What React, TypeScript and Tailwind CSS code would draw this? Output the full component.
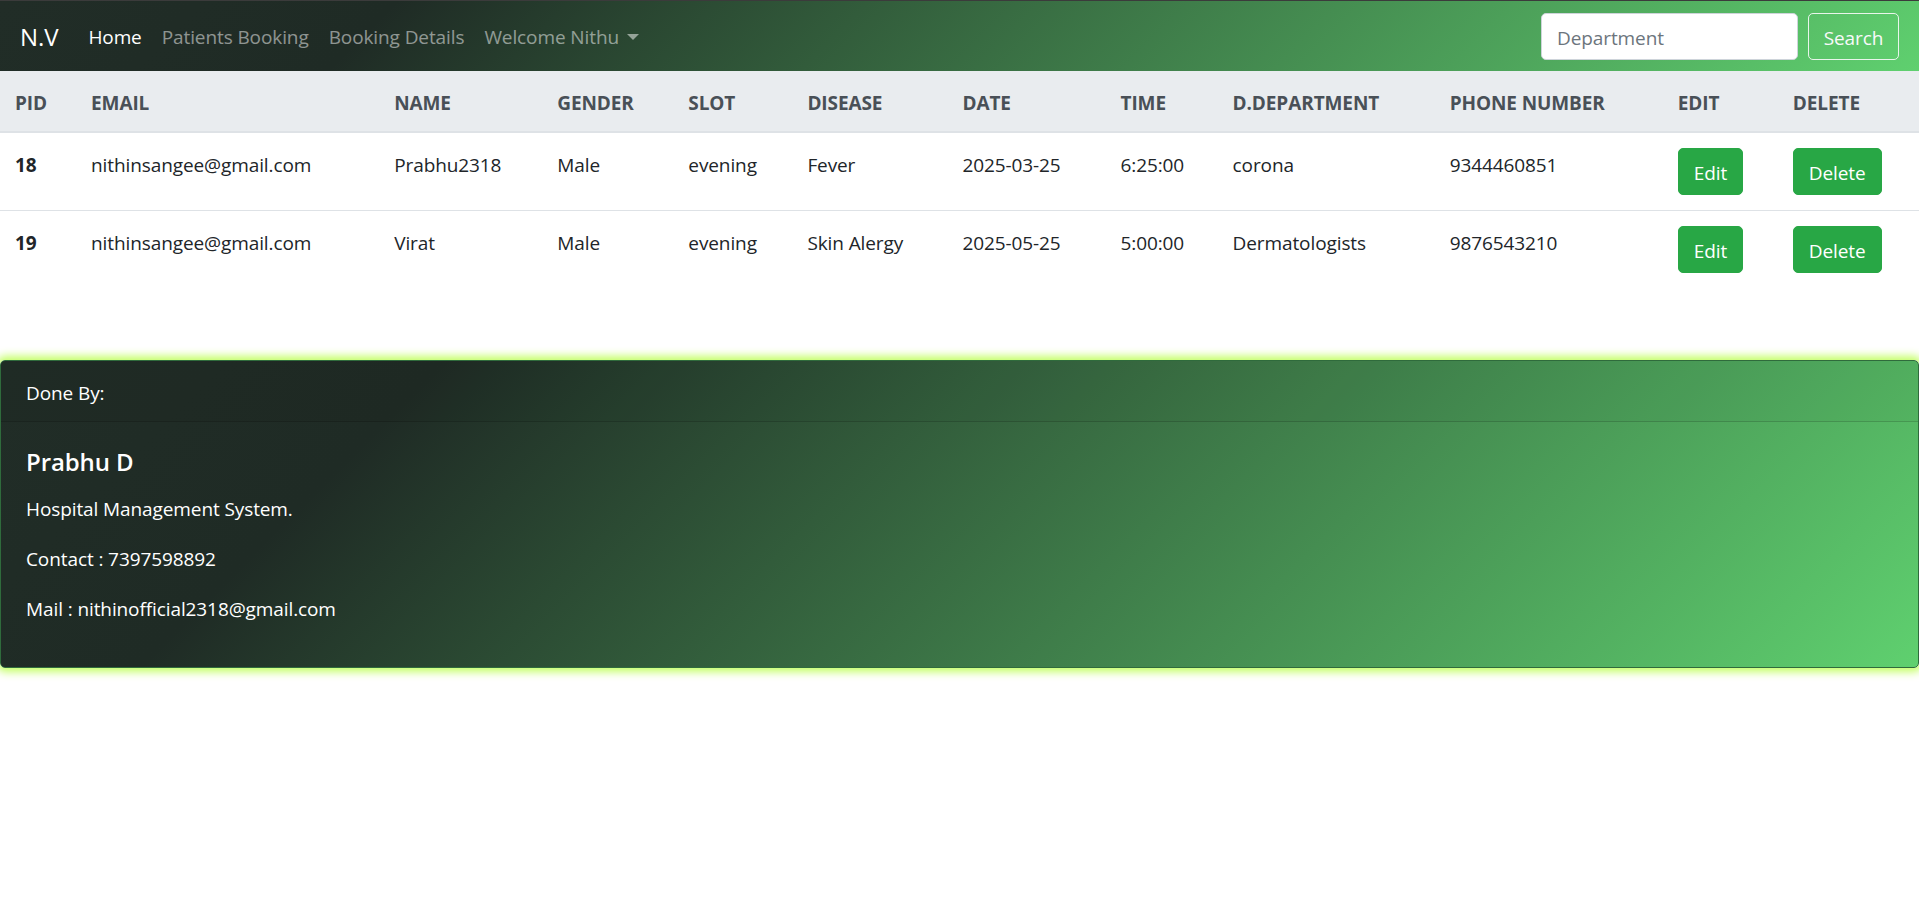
import React from "react";

const rows = [
  {
    pid: "18",
    email: "nithinsangee@gmail.com",
    name: "Prabhu2318",
    gender: "Male",
    slot: "evening",
    disease: "Fever",
    date: "2025-03-25",
    time: "6:25:00",
    dept: "corona",
    phone: "9344460851",
  },
  {
    pid: "19",
    email: "nithinsangee@gmail.com",
    name: "Virat",
    gender: "Male",
    slot: "evening",
    disease: "Skin Alergy",
    date: "2025-05-25",
    time: "5:00:00",
    dept: "Dermatologists",
    phone: "9876543210",
  },
];

const headers: { label: string; w: string }[] = [
  { label: "PID", w: "w-[76px]" },
  { label: "EMAIL", w: "w-[303px]" },
  { label: "NAME", w: "w-[163px]" },
  { label: "GENDER", w: "w-[131px]" },
  { label: "SLOT", w: "w-[119px]" },
  { label: "DISEASE", w: "w-[155px]" },
  { label: "DATE", w: "w-[158px]" },
  { label: "TIME", w: "w-[112px]" },
  { label: "D.DEPARTMENT", w: "w-[217px]" },
  { label: "PHONE NUMBER", w: "w-[228px]" },
  { label: "EDIT", w: "w-[115px]" },
  { label: "DELETE", w: "w-[141px]" },
];

const td = "px-[15px] pt-[17px] pb-[13px] align-top border-t border-[#dee2e6]";
const tdBtn = "p-[15px] align-top border-t border-[#dee2e6]";

export default function App() {
  return (
    <div
      className="min-h-screen bg-white text-[#212529] text-[19px] leading-[30px] tracking-[-0.1px]"
      style={{ fontFamily: '"Open Sans", "Noto Sans", sans-serif' }}
    >
      <nav className="h-[71px] flex items-center px-5 border-t border-[#3b3b3b] bg-[linear-gradient(135deg,#212d27_0%,#1f2b25_20%,#5fd06f_100%)]">
        <span className="text-[24px] leading-[38px] text-white mr-5 pt-[2px]">N.V</span>
        <div className="flex items-center pt-[2px]">
          <a className="px-[10px] text-white">Home</a>
          <a className="px-[10px] text-white/50">Patients Booking</a>
          <a className="px-[10px] text-white/50">Booking Details</a>
          <a className="px-[10px] text-white/50 flex items-center">
            Welcome Nithu
            <span className="ml-[8px] inline-block w-0 h-0 border-l-[6px] border-r-[6px] border-t-[6px] border-l-transparent border-r-transparent border-t-white/50" />
          </a>
        </div>
        <div className="ml-auto flex items-center">
          <input
            className="w-[257px] h-[47px] rounded-[5px] border border-[#ced4da] bg-white px-[15px] pt-[3px] text-[19px] text-[#495057] placeholder:text-[#6c757d] outline-none"
            placeholder="Department"
          />
          <button className="ml-[10px] w-[91px] h-[47px] pt-[3px] rounded-[5px] border border-[#f8f9fa]/90 text-[#f8f9fa] text-[19px]">
            Search
          </button>
        </div>
      </nav>

      <table className="w-full table-fixed border-collapse">
        <thead>
          <tr className="bg-[#e9ecef]">
            {headers.map((h) => (
              <th
                key={h.label}
                className={`${h.w} px-[15px] pt-[17px] pb-[13px] text-left font-bold text-[#495057] border-b-2 border-[#dee2e6] align-bottom whitespace-nowrap`}
              >
                {h.label}
              </th>
            ))}
          </tr>
        </thead>
        <tbody>
          {rows.map((r) => (
            <tr key={r.pid}>
              <td className={`${td} font-bold`}>{r.pid}</td>
              <td className={td}>{r.email}</td>
              <td className={td}>{r.name}</td>
              <td className={td}>{r.gender}</td>
              <td className={td}>{r.slot}</td>
              <td className={td}>{r.disease}</td>
              <td className={td}>{r.date}</td>
              <td className={td}>{r.time}</td>
              <td className={td}>{r.dept}</td>
              <td className={td}>{r.phone}</td>
              <td className={tdBtn}>
                <button className="h-[47px] px-[15px] pt-[3px] rounded-[5px] bg-[#28a745] border border-[#28a745] text-white">
                  Edit
                </button>
              </td>
              <td className={tdBtn}>
                <button className="h-[47px] px-[15px] pt-[3px] rounded-[5px] bg-[#28a745] border border-[#28a745] text-white">
                  Delete
                </button>
              </td>
            </tr>
          ))}
        </tbody>
      </table>

      <div className="mt-[72px] rounded-[5px] border border-[#2f6b3c] text-white shadow-[0_0_8px_4px_#c4ff66] bg-[linear-gradient(135deg,#212d27_0%,#1f2b25_20%,#5fd06f_100%)]">
        <div className="px-[25px] pt-[17px] pb-[13px] border-b border-black/15 bg-black/[0.03]">Done By:</div>
        <div className="p-[25px]">
          <h5 className="text-[24px] leading-[30px] font-semibold mb-[17px]">Prabhu D</h5>
          <p className="mb-[20px]">Hospital Management System.</p>
          <p className="mb-[20px]">Contact : 7397598892</p>
          <p className="mb-[18px]">Mail : nithinofficial2318@gmail.com</p>
        </div>
      </div>
    </div>
  );
}
